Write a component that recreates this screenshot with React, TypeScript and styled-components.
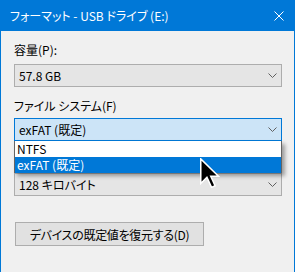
import React from "react";
import styled, { createGlobalStyle } from "styled-components";

const GlobalStyle = createGlobalStyle`
  html, body {
    margin: 0;
    padding: 0;
    background: #f0f0f0;
  }
  body {
    font-family: "Noto Sans CJK JP", "Noto Sans", sans-serif;
    font-size: 12px;
    font-feature-settings: "palt";
    color: #000;
  }
`;

const Window = styled.div`
  position: relative;
  width: 295px;
  height: 272px;
  box-sizing: border-box;
  border-left: 1px solid #0078d7;
  border-right: 1px solid #0078d7;
  background: #f0f0f0;
  overflow: hidden;
`;

const TitleBar = styled.div`
  height: 31px;
  background: #0078d7;
  color: #fff;
  display: flex;
  align-items: center;
  justify-content: space-between;
  padding: 0 10px 0 9px;
`;

const Title = styled.span`
  font-size: 12px;
  line-height: 16px;
`;

const CloseIcon = styled.svg`
  width: 10px;
  height: 10px;
`;

const Content = styled.div`
  display: flex;
  flex-direction: column;
  padding: 11px 12px 0 13px;
`;

const Label = styled.div<{ $top: number; $bottom: number }>`
  height: 16px;
  line-height: 16px;
  margin-top: ${(p) => p.$top}px;
  margin-bottom: ${(p) => p.$bottom}px;
`;

const ComboWrap = styled.div`
  position: relative;
`;

const Combo = styled.div<{ $focused?: boolean }>`
  height: 23px;
  box-sizing: border-box;
  display: flex;
  align-items: center;
  justify-content: space-between;
  padding: 0 4px 0 4px;
  border: 1px solid ${(p) => (p.$focused ? "#0078d7" : "#adadad")};
  background: ${(p) => (p.$focused ? "#cce4f7" : "#e5e5e5")};
`;

const Chevron = styled.svg`
  width: 9px;
  height: 5px;
`;

const List = styled.div`
  position: absolute;
  top: 100%;
  left: 0;
  right: 0;
  z-index: 2;
  background: #fff;
  border-left: 1px solid #646464;
  border-right: 1px solid #646464;
  box-shadow: 3px 3px 4px rgba(0, 0, 0, 0.35);
`;

const Option = styled.div<{ $selected?: boolean }>`
  height: 16px;
  line-height: 16px;
  padding-left: 2px;
  background: ${(p) => (p.$selected ? "#0078d7" : "#fff")};
  color: ${(p) => (p.$selected ? "#fff" : "#000")};
`;

const Button = styled.div`
  margin-top: 26px;
  width: 189px;
  height: 24px;
  box-sizing: border-box;
  margin-left: 1px;
  border: 1px solid #adadad;
  background: #e1e1e1;
  display: flex;
  align-items: center;
  justify-content: center;
  letter-spacing: -0.3px;
`;

const Cursor = styled.svg`
  position: absolute;
  left: 199px;
  top: 158px;
  width: 20px;
  height: 31px;
  z-index: 5;
`;

const ChevronDown = () => (
  <Chevron viewBox="0 0 9 5">
    <polyline points="0.5,0.5 4.5,4.5 8.5,0.5" fill="none" stroke="#606060" strokeWidth="1" />
  </Chevron>
);

export default function App() {
  return (
    <>
      <GlobalStyle />
      <Window>
        <TitleBar>
          <Title>フォーマット - USB ドライブ (E:)</Title>
          <CloseIcon viewBox="0 0 10 10">
            <path d="M0.5 0.5 L9.5 9.5 M9.5 0.5 L0.5 9.5" stroke="#fff" strokeWidth="1" />
          </CloseIcon>
        </TitleBar>
        <Content>
          <Label $top={0} $bottom={6}>容量(P):</Label>
          <Combo>
            <span>57.8 GB</span>
            <ChevronDown />
          </Combo>
          <Label $top={11} $bottom={4}>ファイル システム(F)</Label>
          <ComboWrap>
            <Combo $focused>
              <span>exFAT (既定)</span>
              <ChevronDown />
            </Combo>
            <List>
              <Option>NTFS</Option>
              <Option $selected>exFAT (既定)</Option>
            </List>
          </ComboWrap>
          {/* the allocation size label sits under the open list */}
          <Label $top={11} $bottom={5} />
          <Combo>
            <span>128 キロバイト</span>
            <ChevronDown />
          </Combo>
          <Button>デバイスの既定値を復元する(D)</Button>
        </Content>
        <Cursor viewBox="0 0 13 20">
          <polygon
            points="0.5,0.5 0.5,16.5 4.5,12.5 7.5,19 9.8,18 7,11.8 12,11.8"
            fill="#000"
            stroke="#fff"
            strokeWidth="1"
            strokeLinejoin="miter"
          />
        </Cursor>
      </Window>
    </>
  );
}
